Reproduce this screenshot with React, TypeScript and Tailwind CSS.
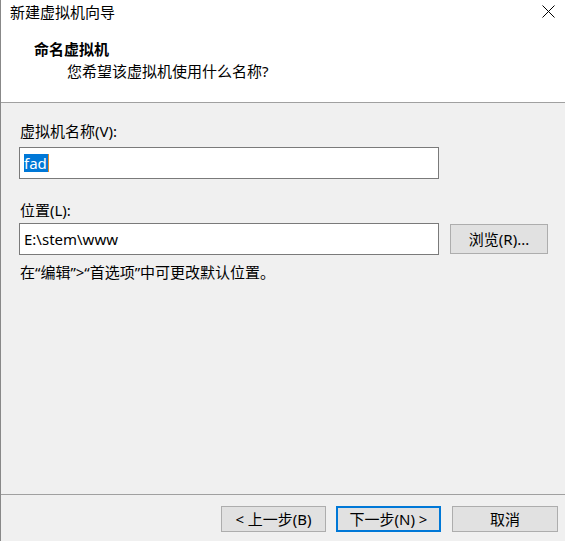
export default function App() {
  const font = { fontFamily: '"Noto Sans", "Noto Sans CJK SC", sans-serif' }

  return (
    <div
      className="w-[565px] h-[541px] bg-[#f0f0f0] border-l border-[#888888] flex flex-col text-black text-[15px] overflow-hidden"
      style={font}
    >
      {/* Header */}
      <div className="h-[103px] bg-white border-b border-[#a0a0a0] flex flex-col">
        <div className="h-[24px] flex items-center justify-between pl-[9px] pr-[10px]">
          <span className="leading-[24px]">新建虚拟机向导</span>
          <svg width="13" height="13" viewBox="0 0 13 13" className="mt-[-1px]">
            <path d="M0.5 0.5 L12.5 12.5 M12.5 0.5 L0.5 12.5" stroke="#000" strokeWidth="1" />
          </svg>
        </div>
        <div className="mt-[14px] pl-[33px] leading-[22px] font-bold">命名虚拟机</div>
        <div className="pl-[66px] leading-[22px]">您希望该虚拟机使用什么名称?</div>
      </div>

      {/* Body */}
      <div className="flex-1 flex flex-col pl-[18px]">
        <div className="mt-[18px] pl-[1px] leading-[20px]">虚拟机名称(V):</div>
        <div className="mt-[6px] w-[420px] h-[32px] bg-white border border-[#7a7a7a] flex items-center pl-[4px]">
          <span className="bg-[#0078d7] text-white leading-[18px] pr-[1px]">fad</span>
          <span className="w-[1px] h-[18px] bg-[#e08a2c]" />
        </div>

        <div className="mt-[21px] pl-[1px] leading-[20px]">位置(L):</div>
        <div className="mt-[3px] flex items-center">
          <div className="w-[420px] h-[32px] bg-white border border-[#7a7a7a] flex items-center pl-[4px]">
            <span className="leading-[20px]">E:\stem\www</span>
          </div>
          <button className="ml-[11px] w-[98px] h-[30px] bg-[#e1e1e1] border border-[#adadad] flex items-center justify-center leading-[20px]">
            浏览(R)...
          </button>
        </div>

        <div className="mt-[7px] pl-[1px] leading-[20px]">在“编辑”&gt;“首选项”中可更改默认位置。</div>
      </div>

      {/* Footer */}
      <div className="h-[47px] border-t border-[#a0a0a0] flex justify-end pt-[11px] pr-[7px]">
        <button className="w-[105px] h-[26px] bg-[#e1e1e1] border border-[#adadad] flex items-center justify-center leading-[20px]">
          &lt; 上一步(B)
        </button>
        <button className="ml-[10px] w-[105px] h-[26px] bg-[#e1e1e1] border-2 border-[#0078d7] flex items-center justify-center leading-[20px]">
          下一步(N) &gt;
        </button>
        <button className="ml-[11px] w-[106px] h-[26px] bg-[#e1e1e1] border border-[#adadad] flex items-center justify-center leading-[20px]">
          取消
        </button>
      </div>
    </div>
  )
}
